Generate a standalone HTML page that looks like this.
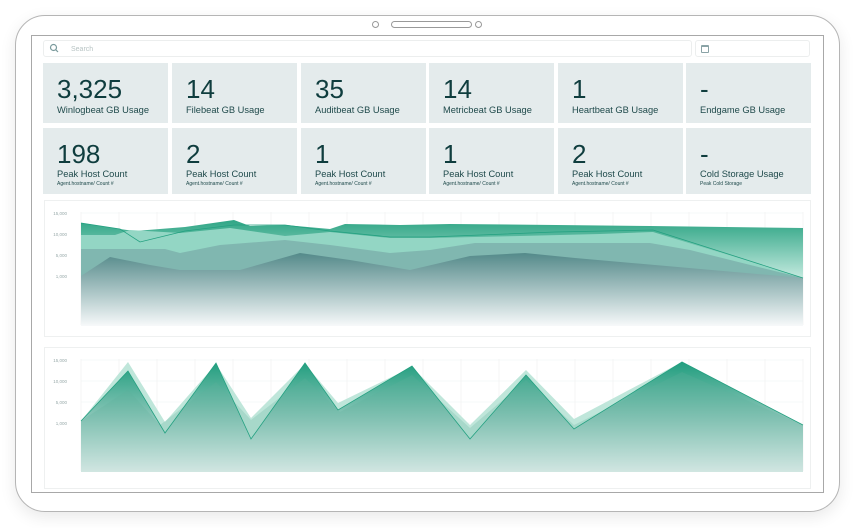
<!DOCTYPE html>
<html><head><meta charset="utf-8"><style>
*{margin:0;padding:0;box-sizing:border-box}
body{width:855px;height:528px;background:#fff;position:relative;overflow:hidden;font-family:"Liberation Sans",Arial,sans-serif;color:#0f3d3e}
.tab{position:absolute;left:15px;top:15px;width:825px;height:497px;border:1.5px solid #b5b5b5;border-radius:30px;background:#fff;box-shadow:0 5px 16px rgba(0,0,0,.09)}
.scr{position:absolute;left:31px;top:35px;width:793px;height:458px;border:1px solid #a8a8a8;background:#fff}
.search{position:absolute;left:43px;top:40px;width:649px;height:17px;border:1px solid #eceeee;border-radius:3px;font-size:7px;color:#b8c4c4;padding:5px 0 0 27px}
.date{position:absolute;left:695px;top:40px;width:115px;height:17px;border:1px solid #eceeee;border-radius:3px}
.card{position:absolute;width:125px;background:#e4ebec}
.num{position:absolute;left:14px;font-size:26px;color:#0f3d3e}
.lb{position:absolute;left:14px;font-size:9.3px;color:#1f4a4b;white-space:nowrap}
.sm{position:absolute;left:14px;font-size:5px;color:#1f4a4b;white-space:nowrap}
.panel{position:absolute;left:44px;width:767px;border:1px solid #eef0f0;background:#fff}
svg{position:absolute;left:0;top:0}
</style></head><body>
<div class="tab"></div>
<div style="position:absolute;left:372px;top:21px;width:7px;height:7px;border:1px solid #999;border-radius:50%"></div>
<div style="position:absolute;left:391px;top:21px;width:81px;height:7px;border:1px solid #999;border-radius:4px"></div>
<div style="position:absolute;left:475px;top:21px;width:7px;height:7px;border:1px solid #999;border-radius:50%"></div>
<div class="scr"></div>
<div class="search">Search</div>
<svg width="855" height="528" style="z-index:2;pointer-events:none"><circle cx="53.5" cy="47.5" r="3" fill="none" stroke="#7a9a9c" stroke-width="1.2"/><line x1="55.7" y1="49.7" x2="58" y2="52" stroke="#7a9a9c" stroke-width="1.2"/></svg>
<div class="date"><div style="position:absolute;left:5px;top:4px;width:8px;height:8px;border:1px solid #8aa3a6;border-top-width:2.5px;border-radius:1px"></div></div>

<div class="card" style="left:43px;top:63px;height:60px"><div class="num" style="top:11px">3,325</div><div class="lb" style="top:42px">Winlogbeat GB Usage</div></div>
<div class="card" style="left:172px;top:63px;height:60px"><div class="num" style="top:11px">14</div><div class="lb" style="top:42px">Filebeat GB Usage</div></div>
<div class="card" style="left:301px;top:63px;height:60px"><div class="num" style="top:11px">35</div><div class="lb" style="top:42px">Auditbeat GB Usage</div></div>
<div class="card" style="left:429px;top:63px;height:60px"><div class="num" style="top:11px">14</div><div class="lb" style="top:42px">Metricbeat GB Usage</div></div>
<div class="card" style="left:558px;top:63px;height:60px"><div class="num" style="top:11px">1</div><div class="lb" style="top:42px">Heartbeat GB Usage</div></div>
<div class="card" style="left:686px;top:63px;height:60px"><div class="num" style="top:11px">-</div><div class="lb" style="top:42px">Endgame GB Usage</div></div>

<div class="card" style="left:43px;top:128px;height:66px"><div class="num" style="top:11px">198</div><div class="lb" style="top:41px">Peak Host Count</div><div class="sm" style="top:53px">Agent.hostname/ Count #</div></div>
<div class="card" style="left:172px;top:128px;height:66px"><div class="num" style="top:11px">2</div><div class="lb" style="top:41px">Peak Host Count</div><div class="sm" style="top:53px">Agent.hostname/ Count #</div></div>
<div class="card" style="left:301px;top:128px;height:66px"><div class="num" style="top:11px">1</div><div class="lb" style="top:41px">Peak Host Count</div><div class="sm" style="top:53px">Agent.hostname/ Count #</div></div>
<div class="card" style="left:429px;top:128px;height:66px"><div class="num" style="top:11px">1</div><div class="lb" style="top:41px">Peak Host Count</div><div class="sm" style="top:53px">Agent.hostname/ Count #</div></div>
<div class="card" style="left:558px;top:128px;height:66px"><div class="num" style="top:11px">2</div><div class="lb" style="top:41px">Peak Host Count</div><div class="sm" style="top:53px">Agent.hostname/ Count #</div></div>
<div class="card" style="left:686px;top:128px;height:66px"><div class="num" style="top:11px">-</div><div class="lb" style="top:41px">Cold Storage Usage</div><div class="sm" style="top:53px">Peak Cold Storage</div></div>

<div class="panel" style="top:200px;height:137px"></div>
<div class="panel" style="top:347px;height:142px"></div>

<svg width="855" height="528">
<defs>
<linearGradient id="gA" gradientUnits="userSpaceOnUse" x1="0" y1="220" x2="0" y2="280"><stop offset="0" stop-color="#2fa585"/><stop offset="1" stop-color="#c9ece2"/></linearGradient>
<linearGradient id="gD" gradientUnits="userSpaceOnUse" x1="0" y1="250" x2="0" y2="326"><stop offset="0" stop-color="#4d8585"/><stop offset="1" stop-color="#f7f9fa"/></linearGradient>
<linearGradient id="g2" gradientUnits="userSpaceOnUse" x1="0" y1="362" x2="0" y2="472"><stop offset="0" stop-color="#229e7f"/><stop offset="0.5" stop-color="#8ac6b8"/><stop offset="1" stop-color="#f7f8f9"/></linearGradient>
</defs>
<g stroke="#eef1f1" stroke-width="0.6">
<line x1="81" y1="213" x2="803" y2="213"/><line x1="81" y1="234" x2="803" y2="234"/><line x1="81" y1="255" x2="803" y2="255"/><line x1="81" y1="276" x2="803" y2="276"/>
<line x1="81" y1="360" x2="803" y2="360"/><line x1="81" y1="381" x2="803" y2="381"/><line x1="81" y1="402" x2="803" y2="402"/><line x1="81" y1="423" x2="803" y2="423"/>
<path d="M81 212V325M119 212V325M157 212V325M195 212V325M233 212V325M271 212V325M309 212V325M347 212V325M385 212V325M423 212V325M461 212V325M499 212V325M537 212V325M575 212V325M613 212V325M651 212V325M689 212V325M727 212V325M765 212V325M803 212V325"/>
<path d="M81 359V471M119 359V471M157 359V471M195 359V471M233 359V471M271 359V471M309 359V471M347 359V471M385 359V471M423 359V471M461 359V471M499 359V471M537 359V471M575 359V471M613 359V471M651 359V471M689 359V471M727 359V471M765 359V471M803 359V471"/>
</g>
<g font-size="4.5" fill="#9aa" text-anchor="end">
<text x="67" y="215">15,000</text><text x="67" y="236">10,000</text><text x="67" y="257">5,000</text><text x="67" y="278">1,000</text>
<text x="67" y="362">15,000</text><text x="67" y="383">10,000</text><text x="67" y="404">5,000</text><text x="67" y="425">1,000</text>
</g>
<path d="M81 223L120 229L135 231L185 227L234 220L250 226L285 225L330 229L345 224L400 225L450 224L556 225L650 226L803 228V326H81Z" fill="url(#gA)"/>
<path d="M81 235L115 235L130 230L180 233L230 228L285 236L330 232L390 238L430 238L520 236L600 234L653 232L803 278V326H81Z" fill="#93d6c4"/>
<path d="M81 249L165 249L180 253L220 245L285 240L330 245L390 253L430 250L475 243L650 243L690 250L803 278V326H81Z" fill="#80b7b0"/>
<path d="M81 276L110 257L150 265L180 270L240 270L300 253L350 260L410 270L470 256L525 253L575 258L803 278V326H81Z" fill="url(#gD)"/>
<path d="M81 223L120 229L140 242L185 231L234 225L285 225L330 231L390 237L430 237L555 232L653 230L803 278" fill="none" stroke="#23a080" stroke-width="0.8"/>
<path d="M81 421L128 362L165 422L216 364L251 418L305 364L338 403L412 367L470 425L526 370L574 419L682 362L803 425V472H81Z" fill="#bfe6da"/>
<path d="M81 421L128 371L165 433L216 363L251 439L305 363L338 410L412 366L470 439L526 375L574 429L682 362L803 425V472H81Z" fill="url(#g2)"/>
<path d="M81 421L128 390L160 425L216 382L251 420L305 378L340 412L412 375L470 428L526 380L574 425L682 372L803 425V472H81Z" fill="#5fae9c" opacity="0.25"/>
<path d="M81 421L128 371L165 433L216 363L251 439L305 363L338 410L412 366L470 439L526 375L574 429L682 362L803 425" fill="none" stroke="#23a080" stroke-width="0.8"/>
</svg>
</body></html>
